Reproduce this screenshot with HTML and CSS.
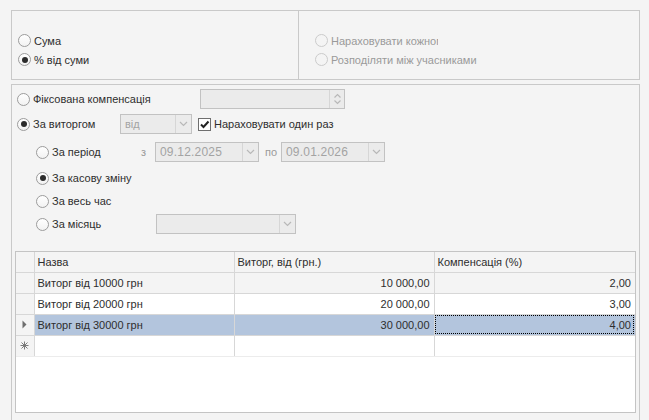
FILE: index.html
```html
<!DOCTYPE html>
<html>
<head>
<meta charset="utf-8">
<link rel="stylesheet" href="styles.css">
</head>
<body>
<div class="top">
  <div class="col-left">
    <div class="opt"><span class="radio"></span><span class="lbl">Сума</span></div>
    <div class="opt"><span class="radio on"></span><span class="lbl">% від суми</span></div>
  </div>
  <div class="col-right">
    <div class="opt"><span class="radio dis"></span><span class="lbl dim clip">Нараховувати кожному</span></div>
    <div class="opt"><span class="radio dis"></span><span class="lbl dim">Розподіляти між учасниками</span></div>
  </div>
</div>
<div class="bottom">
  <div class="row r1">
    <div class="opt w-fixed"><span class="radio"></span><span class="lbl">Фіксована компенсація</span></div>
    <div class="field spin-field"><span class="fill"></span><span class="spin"><svg width="9" height="14" viewBox="0 0 9 14"><path d="M1.5 5.5 L4.5 2.5 L7.5 5.5" fill="none" stroke="#b8b8b8" stroke-width="1.2"/><path d="M1.5 8.5 L4.5 11.5 L7.5 8.5" fill="none" stroke="#b8b8b8" stroke-width="1.2"/></svg></span></div>
  </div>
  <div class="row r2">
    <div class="opt w-rev"><span class="radio on"></span><span class="lbl">За виторгом</span></div>
    <div class="field combo c-from"><span class="fill txt">від</span><span class="btn"><svg width="9" height="6" viewBox="0 0 9 6"><path d="M1 1 L4.5 4.5 L8 1" fill="none" stroke="#b8b8b8" stroke-width="1.2"/></svg></span></div>
    <div class="chk-wrap"><span class="chk"><svg width="11" height="11" viewBox="0 0 11 11"><path d="M2 5.5 L4.5 8 L9.5 2.5" fill="none" stroke="#222" stroke-width="2"/></svg></span><span class="lbl">Нараховувати один раз</span></div>
  </div>
  <div class="row r3 indent">
    <div class="opt w-period"><span class="radio"></span><span class="lbl">За період</span></div>
    <span class="small-lbl w-z">з</span>
    <div class="field combo c-date"><span class="fill txt">09.12.2025</span><span class="btn"><svg width="9" height="6" viewBox="0 0 9 6"><path d="M1 1 L4.5 4.5 L8 1" fill="none" stroke="#b8b8b8" stroke-width="1.2"/></svg></span></div>
    <span class="small-lbl w-po">по</span>
    <div class="field combo c-date"><span class="fill txt">09.01.2026</span><span class="btn"><svg width="9" height="6" viewBox="0 0 9 6"><path d="M1 1 L4.5 4.5 L8 1" fill="none" stroke="#b8b8b8" stroke-width="1.2"/></svg></span></div>
  </div>
  <div class="row r4 indent">
    <div class="opt"><span class="radio on"></span><span class="lbl">За касову зміну</span></div>
  </div>
  <div class="row r5 indent">
    <div class="opt"><span class="radio"></span><span class="lbl">За весь час</span></div>
  </div>
  <div class="row r6 indent">
    <div class="opt w-month"><span class="radio"></span><span class="lbl">За місяць</span></div>
    <div class="field combo c-month"><span class="fill"></span><span class="btn"><svg width="9" height="6" viewBox="0 0 9 6"><path d="M1 1 L4.5 4.5 L8 1" fill="none" stroke="#b8b8b8" stroke-width="1.2"/></svg></span></div>
  </div>
  <div class="grid">
    <table>
      <colgroup><col class="k-ind"><col class="k-c"><col class="k-c"><col></colgroup>
      <thead>
        <tr><th class="ind"></th><th>Назва</th><th>Виторг, від (грн.)</th><th>Компенсація (%)</th></tr>
      </thead>
      <tbody>
        <tr class="alt"><td class="ind"></td><td>Виторг від 10000 грн</td><td class="num">10 000,00</td><td class="num">2,00</td></tr>
        <tr><td class="ind"></td><td>Виторг від 20000 грн</td><td class="num">20 000,00</td><td class="num">3,00</td></tr>
        <tr class="sel"><td class="ind"><svg width="5" height="9" viewBox="0 0 5 9"><path d="M0.5 0.5 L4.5 4.5 L0.5 8.5 Z" fill="#6e6e6e"/></svg></td><td>Виторг від 30000 грн</td><td class="num">30 000,00</td><td class="num focus">4,00</td></tr>
        <tr class="new"><td class="ind"><svg width="9" height="9" viewBox="0 0 9 9"><path d="M4.5 0.5 V8.5 M0.5 4.5 H8.5 M1.5 1.5 L7.5 7.5 M7.5 1.5 L1.5 7.5" stroke="#7a7a7a" stroke-width="1"/></svg></td><td></td><td></td><td></td></tr>
      </tbody>
    </table>
  </div>
</div>
</body>
</html>
```

FILE: styles.css
```css
* { box-sizing: border-box; }
html, body { margin: 0; padding: 0; }
body {
  background: #f4f4f4;
  font-family: "Liberation Sans", Arial, sans-serif;
  font-size: 11px;
  color: #2e2e2e;
  width: 649px;
  height: 420px;
  overflow: hidden;
}
.top {
  margin: 10px 0 0 11px;
  width: 629px;
  height: 70px;
  border: 1px solid #c9c9c9;
  display: flex;
}
.col-left {
  width: 287px;
  border-right: 1px solid #c9c9c9;
  padding: 20px 0 0 6px;
}
.col-right {
  flex: 1;
  padding: 20px 0 0 16px;
}
.opt {
  display: flex;
  align-items: center;
  height: 19px;
}
.radio {
  display: inline-block;
  flex: none;
  width: 13px;
  height: 13px;
  border-radius: 50%;
  border: 1px solid #9c9c9c;
  background: linear-gradient(#ffffff, #f2f2f2);
  position: relative;
  margin-right: 3px;
}
.radio.on::after {
  content: "";
  position: absolute;
  left: 2.5px;
  top: 2.5px;
  width: 6px;
  height: 6px;
  border-radius: 50%;
  background: #2b2b2b;
}
.radio.dis {
  border-color: #cbcbcb;
  background: #f4f4f4;
}
.lbl { white-space: nowrap; }
.dim { color: #9a9a9a; }
.clip { display: inline-block; width: 107px; overflow: hidden; }
.bottom {
  margin: 4px 0 0 11px;
  width: 629px;
  height: 400px;
  border: 1px solid #c9c9c9;
  border-bottom: none;
  padding-left: 5px;
}
.row {
  display: flex;
  align-items: center;
  height: 20px;
}
.r1 { margin-top: 4px; }
.r2 { margin-top: 5px; }
.r3 { margin-top: 8px; }
.r4 { margin-top: 6px; }
.r5 { margin-top: 3px; }
.r6 { margin-top: 3px; }
.indent { padding-left: 19px; }
.w-fixed { width: 183px; }
.w-rev { width: 103px; }
.w-period { width: 105px; }
.w-month { width: 120px; }
.small-lbl { color: #9a9a9a; font-size: 11px; }
.w-z { width: 14px; }
.w-po { width: 16px; margin-left: 6px; }
.field {
  display: flex;
  height: 20px;
  border: 1px solid #c2c2c2;
  background: #ebebeb;
}
.fill { flex: 1; display: flex; align-items: center; padding-left: 4px; }
.txt { color: #a3a3a3; }
.spin-field { width: 145px; }
.spin {
  width: 15px;
  border-left: 1px solid #d6d6d6;
  display: flex;
  align-items: center;
  justify-content: center;
}
.combo .btn {
  width: 16px;
  border-left: 1px solid #d6d6d6;
  display: flex;
  align-items: center;
  justify-content: center;
}
.c-from { width: 72px; }
.c-date { width: 104px; }
.c-month { width: 140px; }
.c-date .txt { font-size: 12px; letter-spacing: 0.2px; }
.chk-wrap { display: flex; align-items: center; margin-left: 6px; }
.chk {
  width: 13px;
  height: 13px;
  border: 1px solid #6f6f6f;
  background: #fff;
  display: flex;
  align-items: center;
  justify-content: center;
  margin-right: 3px;
}
.chk svg { display: block; }
.grid {
  margin: 17px 0 0 -2px;
  width: 621px;
  height: 162px;
  border: 1px solid #c4c4c4;
  background: #fff;
}
table {
  border-collapse: collapse;
  width: 619px;
  table-layout: fixed;
}
.k-ind { width: 18px; }
.k-c { width: 200px; }
th, td {
  height: 21px;
  padding: 0 3px;
  border: 1px solid #d7d7d7;
  white-space: nowrap;
  overflow: hidden;
  font-weight: normal;
  text-align: left;
}
th {
  height: 20px;
  background: #f4f4f4;
  color: #2e2e2e;
  border-top: none;
}
tr > :first-child { border-left: none; }
tr > :last-child { border-right: none; }
td.ind, th.ind {
  background: #f4f4f4;
  padding: 0;
  text-align: center;
}
td.ind svg { display: block; margin: 0 auto; }
tr.alt td { background: #f4f4f4; }
tr.sel td { background: #b3c5dd; }
tr.sel td.ind { background: #f4f4f4; }
td.num { text-align: right; padding-right: 4px; }
td.focus { outline: 1px dotted #000; outline-offset: -2px; }
tr.new td { border-bottom: 1px solid #ececec; }
```
